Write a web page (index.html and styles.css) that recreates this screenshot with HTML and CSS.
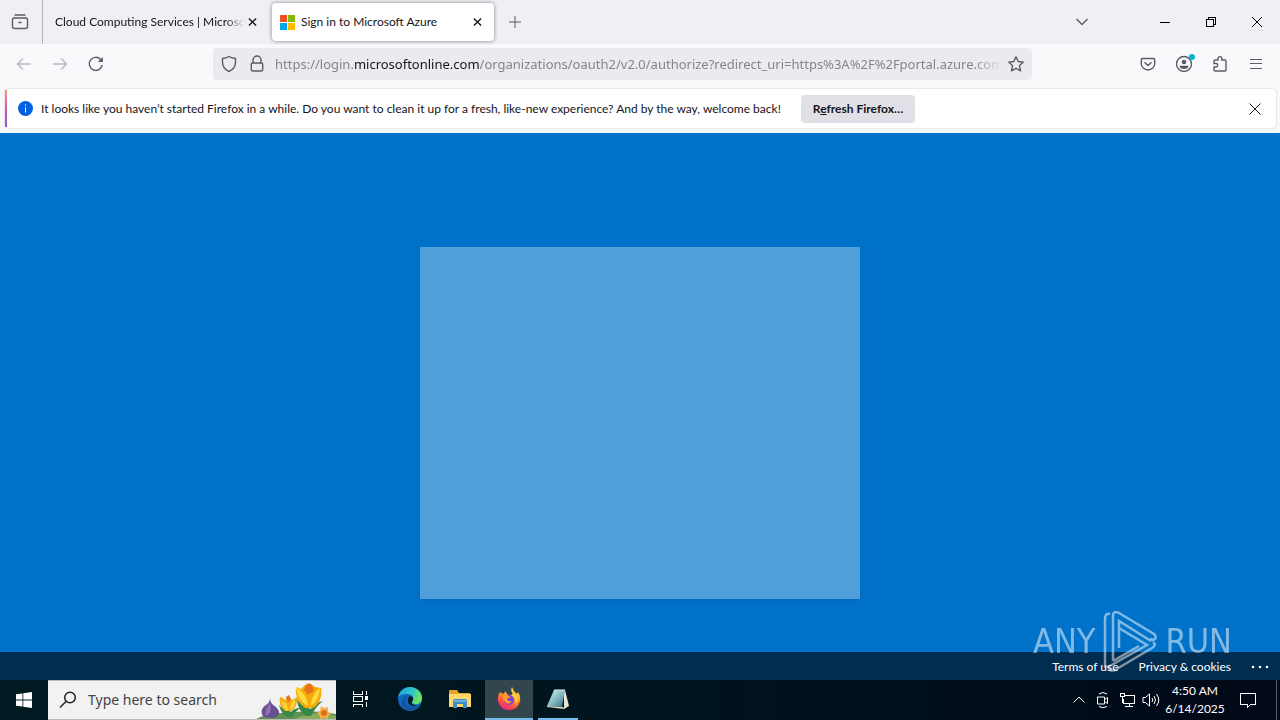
FILE: index.html
```html
<!DOCTYPE html>
<html lang="en">
<head>
<meta charset="utf-8">
<title>Sign in to Microsoft Azure</title>
<link rel="stylesheet" href="styles.css">
</head>
<body>
<header class="tabs">
  <button class="view" aria-label="Firefox View"><svg width="20" height="20" viewBox="0 0 20 20"><path d="M4.500 3h11M4 6h12q1.500 0 1.500 1.500v7q0 2-2 2h-11q-2 0-2-2v-7Q2.500 6 4 6zM8.500 10.500h3"/></svg></button>
  <div class="tab">
    <span class="tab-title faded">Cloud Computing Services | Microsoft Azure</span>
    <button class="close" aria-label="Close tab"><svg width="10" height="10" viewBox="0 0 10 10"><path d="M1 1l8 8M9 1L1 9"/></svg></button>
  </div>
  <div class="tab active">
    <svg class="favicon" width="15" height="15" viewBox="0 0 15 15"><path fill="#f25022" d="M0 0h7v7H0z"/><path fill="#7fba00" d="M8 0h7v7H8z"/><path fill="#00a4ef" d="M0 8h7v7H0z"/><path fill="#ffb900" d="M8 8h7v7H8z"/></svg>
    <span class="tab-title">Sign in to Microsoft Azure</span>
    <button class="close" aria-label="Close tab"><svg width="10" height="10" viewBox="0 0 10 10"><path d="M1 1l8 8M9 1L1 9"/></svg></button>
  </div>
  <button class="new-tab" aria-label="New tab"><svg width="12" height="12" viewBox="0 0 12 12"><path d="M6 0v12M0 6h12"/></svg></button>
  <div class="window-controls">
    <button class="list" aria-label="List all tabs"><svg width="12" height="8" viewBox="0 0 12 8"><path d="M.5 1L6 6.500 11.500 1"/></svg></button>
    <button aria-label="Minimize"><svg class="crisp" width="10" height="10" viewBox="0 0 10 10"><path d="M0 5.500h10"/></svg></button>
    <button aria-label="Restore"><svg class="crisp" width="10" height="10" viewBox="0 0 10 10"><path d="M.5 2.500h7v7h-7zM2.500 2.500v-2h7v7h-2"/></svg></button>
    <button aria-label="Close"><svg width="10" height="10" viewBox="0 0 10 10"><path d="M0 0l10 10M10 0L0 10"/></svg></button>
  </div>
</header>
<nav class="toolbar">
  <div class="group">
    <button class="disabled" aria-label="Back" disabled><svg width="16" height="16" viewBox="0 0 16 16"><path d="M15 8H1.500M7 2.500L1.500 8 7 13.500"/></svg></button>
    <button class="disabled" aria-label="Forward" disabled><svg width="16" height="16" viewBox="0 0 16 16"><path d="M1 8h13.500M9 2.500L14.500 8 9 13.500"/></svg></button>
    <button aria-label="Reload"><svg width="16" height="16" viewBox="0 0 16 16"><path d="M14.200 9A6.500 6.500 0 1 1 12.500 3.300L14.500 5.300"/><path d="M14.800 1v5H9.800z" fill="#5b5b66" stroke="none"/></svg></button>
  </div>
  <div class="urlbar">
    <svg width="16" height="18" viewBox="0 0 16 18"><path d="M8 1.500Q11 3.300 14.500 3.500V7c0 4.500-2.500 7.800-6.500 9.500C4 14.800 1.500 11.500 1.500 7V3.500Q5 3.300 8 1.500z"/></svg>
    <svg width="16" height="18" viewBox="0 0 16 18"><path d="M4 8V5a4 4 0 0 1 8 0v3M3.500 8h9q1.200 0 1.200 1.200v5q0 1.800-1.800 1.800H4.100q-1.800 0-1.800-1.800v-5Q2.300 8 3.500 8z"/></svg>
    <div class="url" role="textbox" aria-label="Address">https://login.<b>microsoftonline.com</b>/organizations/oauth2/v2.0/authorize?redirect_uri=https%3A%2F%2Fportal.azure.com</div>
    <button class="star" aria-label="Bookmark this page"><svg width="16" height="16" viewBox="0 0 16 16"><path stroke-linejoin="round" d="M8 .8l2.200 4.700 5.100.6-3.800 3.500 1 5.300L8 12.300l-4.500 2.600 1-5.300L.7 6.100l5.100-.6z"/></svg></button>
  </div>
  <div class="group end">
    <button aria-label="Save to Pocket"><svg width="16" height="16" viewBox="0 0 16 16"><path d="M2.500 2.500h11q1.200 0 1.200 1.200V7.500a6.700 6.500 0 0 1-13.400 0V3.700q0-1.200 1.200-1.200zM4.500 6.300L8 9.500l3.500-3.200"/></svg></button>
    <button class="account" aria-label="Account"><svg width="18" height="18" viewBox="0 0 18 18"><circle cx="9" cy="9" r="7.500"/><circle cx="9" cy="7" r="2.300" fill="#5b5b66" stroke="none"/><path d="M4.500 10.700h9q0 3.300-4.500 3.300t-4.500-3.300z" fill="#5b5b66" stroke="none"/></svg><span class="dot"></span></button>
    <button aria-label="Extensions"><svg width="16" height="18" viewBox="0 0 16 18"><path d="M2 6q0-1 1-1h3V3.500a1.900 1.900 0 0 1 3.800 0V5H13q1 0 1 1v9q0 1-1 1H3q-1 0-1-1v-3h2a1.500 1.500 0 0 0 0-3.500H2z"/></svg></button>
    <button aria-label="Application menu"><svg class="crisp" width="12" height="12" viewBox="0 0 12 12"><path stroke-width="1" d="M0 1.500h12M0 5.500h12M0 10.500h12"/></svg></button>
  </div>
</nav>
<section class="notice">
  <div class="notice-card">
    <svg width="15" height="15" viewBox="0 0 15 15"><circle cx="7.500" cy="7.500" r="7.500" fill="#0060df" stroke="none"/><path stroke="#fff" d="M7.500 3.300v1.500M7.500 6.300v5.200"/></svg>
    <p>It looks like you haven’t started Firefox in a while. Do you want to clean it up for a fresh, like-new experience? And by the way, welcome back!</p>
    <button class="refresh"><span>R<u>e</u>fresh Firefox…</span></button>
    <button class="dismiss" aria-label="Dismiss"><svg width="12" height="12" viewBox="0 0 12 12"><path d="M.5.5l11 11M11.500.5l-11 11"/></svg></button>
  </div>
</section>
<main class="page">
  <div class="stage"><div class="panel"></div></div>
  <footer class="legal">
    <a href="#terms">Terms of use</a>
    <a href="#privacy">Privacy &amp; cookies</a>
    <button aria-label="More options"><svg width="18" height="4" viewBox="0 0 18 4"><g fill="#fff" stroke="none"><circle cx="2" cy="2" r="1.300"/><circle cx="9" cy="2" r="1.300"/><circle cx="16" cy="2" r="1.300"/></g></svg></button>
  </footer>
  <div class="watermark" aria-hidden="true">
    <span>ANY</span>
    <svg width="56" height="64" viewBox="0 0 56 64"><path d="M8 5Q3 4 3 10v49M11 52V7q0-6 6-3l35 21q4 4-1 6l-3-1M17 39V12l32 20M51 33q4 3-1 6L13 61q-5 2-7-3l39-22L17 19M11 52l26-15"/></svg>
    <span>RUN</span>
  </div>
</main>
<footer class="taskbar">
  <button class="start" aria-label="Start"><svg width="16" height="16" viewBox="0 0 16 16"><path fill="#fff" stroke="none" d="M0 2.300L6.500 1.400v6.200H0zM7.300 1.300L16 0v7.600H7.300zM0 8.400h6.500v6.200L0 13.700zM7.300 8.400H16V16l-8.700-1.300z"/></svg></button>
  <div class="search">
    <svg width="18" height="18" viewBox="0 0 18 18"><circle cx="11" cy="6.500" r="5.300"/><path d="M7.200 10.300L1 16.500"/></svg>
    <input type="text" aria-label="Search" placeholder="Type here to search">
    <svg class="flowers" width="80" height="38" viewBox="0 0 80 38">
      <g stroke="none"><path fill="#629154" d="M0 38Q12 31 30 32q28-4 50 1v5z"/><path fill="#8aad58" d="M38 38q20-9 42-3v3z"/>
      <path fill="#675092" d="M14 17q0 6 6 9 5 5 2 9-7 4-15 0-4-6 3-11 4-2 4-7z"/><path fill="#9270b2" d="M14 22q-6 7-4 13 7-3 4-13z"/>
      <path fill="#378747" d="M32 29q-7-2-9-5 2 9 9 12h4q4-6 8-9-6 0-9 4zM52 27q-9-4-11-10 0 12 9 18h5q5-10 12-15-9 2-12 8z"/>
      <path fill="#f5ae16" d="M24 16q3 0 5 3l3-4 4 4 5-3q1 10-6 14h-6q-7-6-5-14z"/><path fill="#ffd437" d="M26 20q6 2 6 10-6-3-6-10zm13-2q-5 4-5 11 6-3 5-11z"/>
      <path fill="#f7ab0b" d="M40 6l5 2 4-4 6-1 4 3 6 1q2 14-8 20h-8Q38 18 40 6z"/><path fill="#ffdb3d" d="M40 6q11 7 12 19Q41 19 40 6zm24 1q-9 7-9 18 8-6 9-18z"/><path fill="#e8731c" d="M50 4q4-4 6 1 4 4-1 7l-3 2-4-5zM30 16l3-2 2 4-3 4z"/>
      <path fill="#f4af45" d="M65 25l3 2 4-1v4l3 3-3 2v3l-4-1-4 1v-3l-3-3 3-2z"/><circle cx="68" cy="32" r="3" fill="#d7711c"/></g>
    </svg>
  </div>
  <button class="app" aria-label="Task view"><svg class="crisp" width="18" height="18" viewBox="0 0 18 18"><path d="M2.500 1v3h9V1M2.500 17v-3h9v3M2.500 6.500h9v5h-9zM15.500 1v4M15.500 12v5"/><path fill="#fff" stroke="none" d="M14 6h3v4h-3z"/></svg></button>
  <button class="app" aria-label="Microsoft Edge"><svg width="24" height="24" viewBox="0 0 24 24"><defs><linearGradient id="edge" x1="0" y1="0" x2="1" y2=".4"><stop offset="0" stop-color="#189bda"/><stop offset=".6" stop-color="#31c5cb"/><stop offset="1" stop-color="#70e35f"/></linearGradient></defs><g stroke="none"><circle cx="12" cy="12" r="12" fill="#0c69be"/><path fill="url(#edge)" d="M0 11C1 4 6 0 12 0c7 0 12 5 12 11 0 5-4 7-8 6-3-1-2-2-1-4 1-4-2-6-6-6-4 0-8 1-9 4z"/><path fill="#16559e" d="M8 13c-2 6 5 9 13 5-3 5-10 8-15 4-5-5-2-12 4-14-1 1-2 3-2 5z"/><path fill="#071c24" d="M12 9q4 1 3 4-2 3-1 4 2 2 6 1-8 3-10-3-1-4 2-6z"/></g></svg></button>
  <button class="app" aria-label="File Explorer"><svg width="22" height="20" viewBox="0 0 22 20"><g stroke="none"><path fill="#e8a326" d="M0 2q0-1 1-1h7l2 3h11v14H0z"/><path fill="#ffd76a" d="M0 5h22v13H0z"/><path fill="#3c8dc7" d="M4 19v-7q0-2 2-2h10q2 0 2 2v7h-4v-4H8v4z"/><path fill="#66b3e1" d="M5 11h12v2H5z"/></g></svg></button>
  <button class="app current" aria-label="Firefox"><svg width="24" height="24" viewBox="0 0 24 24"><defs><linearGradient id="fox" x1=".8" y1="0" x2=".3" y2="1"><stop offset="0" stop-color="#fff04b"/><stop offset=".45" stop-color="#ff9a25"/><stop offset=".75" stop-color="#ff4b4b"/><stop offset="1" stop-color="#ea2187"/></linearGradient></defs><g stroke="none"><path fill="url(#fox)" d="M3 5l3 2 3-3q0 3 3 4 3 0 4-1-3-3-1-7 1 4 5 7l1-2q3 4 2 9-2 9-11 9T1 14Q0 9 3 5z"/><circle cx="12" cy="13" r="5" fill="#7542df"/><path fill="#ff9926" d="M6 9q3-2 6 0l2 2q-3-1-4 1 1 3 5 2-2 4-6 2-4-3-3-7z"/><path fill="#ffd33b" d="M15 8q5 3 3 9 4-4 2-8l-4-3z"/></g></svg></button>
  <button class="app open" aria-label="Notepad"><svg width="24" height="24" viewBox="0 0 24 24"><defs><linearGradient id="note" x2="1" y2="1"><stop stop-color="#d1f3f3"/><stop offset=".5" stop-color="#87bdc8"/><stop offset="1" stop-color="#316a75"/></linearGradient></defs><g stroke="none"><path fill="#e6e4d5" d="M18 3h1l4 16-5 3z"/><path fill="url(#note)" d="M8 3h11l-3 17-15-1z"/><path fill="#d9d7c7" d="M1 19l15 1 3 1-1 1L1 20z"/></g><path stroke="#d7eded" d="M8 3h11"/></svg></button>
  <div class="tray">
    <button aria-label="Show hidden icons"><svg width="12" height="8" viewBox="0 0 12 8"><path d="M.5 6.500L6 1l5.500 5.500"/></svg></button>
    <button aria-label="Meet Now"><svg width="16" height="18" viewBox="0 0 16 18"><path d="M2.500 6h7v7h-7zM9.500 8.500l3-2v6l-3-2M4 3q4-3 8 0M4 15.500q4 2.500 8 0"/></svg></button>
    <button aria-label="Network"><svg class="crisp" width="16" height="16" viewBox="0 0 16 16"><path d="M5 3.500h10.500v8H4.500V7M10.500 12v3M6 14.500h8M1.500 1.500h4v3h-4zM3.500 5v6"/></svg></button>
    <button aria-label="Volume"><svg width="18" height="16" viewBox="0 0 18 16"><path d="M1 5.500h2.500L7.500 2v12l-4-3.500H1zM10 6q1.500 2 0 4M12 4q3 4 0 8M14.500 2q4.500 6 0 12"/></svg></button>
    <time class="clock" datetime="2025-06-14T04:50">4:50 AM<br>6/14/2025</time>
    <button class="action" aria-label="Notifications"><svg class="crisp" width="18" height="18" viewBox="0 0 18 18"><path d="M1.500 2.500h15v11h-5l-3 3v-3h-7z"/></svg></button>
  </div>
</footer>
</body>
</html>
```
FILE: styles.css
```css
* { box-sizing: border-box; }
body {
  margin: 0;
  min-height: 100vh;
  display: flex;
  flex-direction: column;
  font: 12px/16px Lato, "Noto Sans", sans-serif;
  color: #15141a;
  background: #f9f9fb;
}
button {
  padding: 0;
  border: 0;
  background: none;
  font: inherit;
  color: inherit;
  display: flex;
  align-items: center;
  justify-content: center;
}
svg { display: block; flex: none; fill: none; stroke: currentColor; }
.crisp { shape-rendering: crispEdges; }
p { margin: 0; }

.tabs { height: 44px; display: flex; align-items: center; background: #f0f0f4; }
.view { width: 43px; height: 44px; padding-right: 3px; border-right: 1px solid #b4b4ba; color: #5b5b66; }
.view svg { stroke-width: 1.400; }
.tab { height: 38px; width: 225px; display: flex; align-items: center; padding: 0 4px 0 12px; border-radius: 4px; }
.tab-title { flex: 1; min-width: 0; white-space: nowrap; overflow: hidden; }
.faded { margin-right: -5px; mask-image: linear-gradient(to left, transparent, #000 20px); }
.tab .close { width: 24px; height: 24px; }
.close svg { stroke-width: 1.500; width: 9px; }
.tab.active { width: 222px; margin-left: 4px; padding: 0 5px 0 8px; background: #fff; box-shadow: 0 0 4px #80808e; }
.favicon { margin-right: 6px; stroke: none; }
.new-tab { width: 42px; height: 36px; color: #5b5b66; }
.window-controls { margin-left: auto; display: flex; }
.window-controls button { width: 46px; height: 44px; color: #000; }
.window-controls .list { margin-right: 37px; color: #5b5b66; }
.window-controls .list svg { stroke-width: 1.400; }

.toolbar { height: 44px; display: flex; align-items: center; justify-content: space-between; padding: 0 6px 4px; color: #5b5b66; }
.toolbar svg { stroke-width: 1.400; }
.group { display: flex; width: 207px; }
.group button { width: 36px; height: 36px; position: relative; }
.group.end { justify-content: flex-end; width: 242px; }
.group .disabled { color: #b9b9c0; }
.urlbar { flex: 1; min-width: 0; height: 32px; display: flex; align-items: center; gap: 12px; padding: 0 8px; border-radius: 4px; background: #ebebef; }
.url { flex: 1; min-width: 0; margin: 0 -8px 0 -2px; font: 13px/20px "Noto Sans", sans-serif; white-space: nowrap; overflow: hidden; color: #85848c; mask-image: linear-gradient(to left, transparent, #000 32px); }
.url b { font-weight: 400; color: #15141a; }
.account .dot { position: absolute; top: 8px; right: 7px; width: 6px; height: 6px; border-radius: 50%; background: #00b3d6; }

.notice { height: 45px; padding: 1px 4px 4px 5px; }
.notice-card { height: 39px; display: flex; align-items: center; padding: 0 14px 0 11px; border: 1px solid #e6e6ea; border-left: 2px solid; border-image: linear-gradient(#ff9a5f, #c65bb0, #8b57cf) 0 0 0 2; border-radius: 4px; background: #fff; box-shadow: 0 0 2px #bdbdc4; }
.notice p { margin: 0 20px 0 8px; white-space: nowrap; }
.refresh { height: 28px; padding: 0 12px; border-radius: 4px; background: #e0e0e6; font-weight: 700; white-space: nowrap; }
.dismiss { margin-left: auto; }

.page { flex: 1; position: relative; display: flex; flex-direction: column; background: #0072c9; }
.stage { flex: 1; display: flex; align-items: center; justify-content: center; padding-top: 61px; }
.panel { width: 440px; max-width: 90%; height: 352px; background: #519fd8; box-shadow: 0 2px 6px #006bbd; }
.legal { height: 28px; display: flex; align-items: center; justify-content: flex-end; gap: 20px; padding: 2px 11px 0; background: #002d50; color: #fff; }
.legal a { color: inherit; text-decoration: none; }
.watermark { position: absolute; right: 48px; bottom: 7px; display: flex; align-items: center; gap: 7px; color: #fff; opacity: .5; font: 34px/64px "DejaVu Sans Condensed", sans-serif; pointer-events: none; }
.watermark svg { stroke-width: 2.500; }

.taskbar { height: 40px; display: flex; background: linear-gradient(90deg, #001a22, #00151e 50%, #020817); color: #fff; }
.start { width: 48px; }
.search { width: 288px; display: flex; align-items: center; padding-left: 11px; border: 1px solid #bbb; border-width: 1px 0; background: #f2f2f2; color: #222; }
.search svg { stroke-width: 1.500; }
.search input { flex: 1; min-width: 0; padding: 0; margin-left: 11px; border: 0; background: none; font: 14px/20px "Noto Sans", sans-serif; color: #333; }
.search input::placeholder { color: #444; opacity: 1; }
.search .flowers { margin-left: -20px; }
.app { width: 48px; margin-right: 2px; border-bottom: 2px solid transparent; }
.app.current { margin: 0 5px 0 -1px; border-color: #76b9ed; background: #33464d; }
.app.open { width: 40px; border-color: #76b9ed; }
.tray { margin-left: auto; display: flex; align-items: center; }
.tray button { width: 24px; height: 40px; }
.tray .clock { width: 64px; text-align: center; line-height: 18px; }
.tray .action { width: 50px; border-right: 1px solid #59616a; margin-right: 3px; padding-right: 8px; }
```
